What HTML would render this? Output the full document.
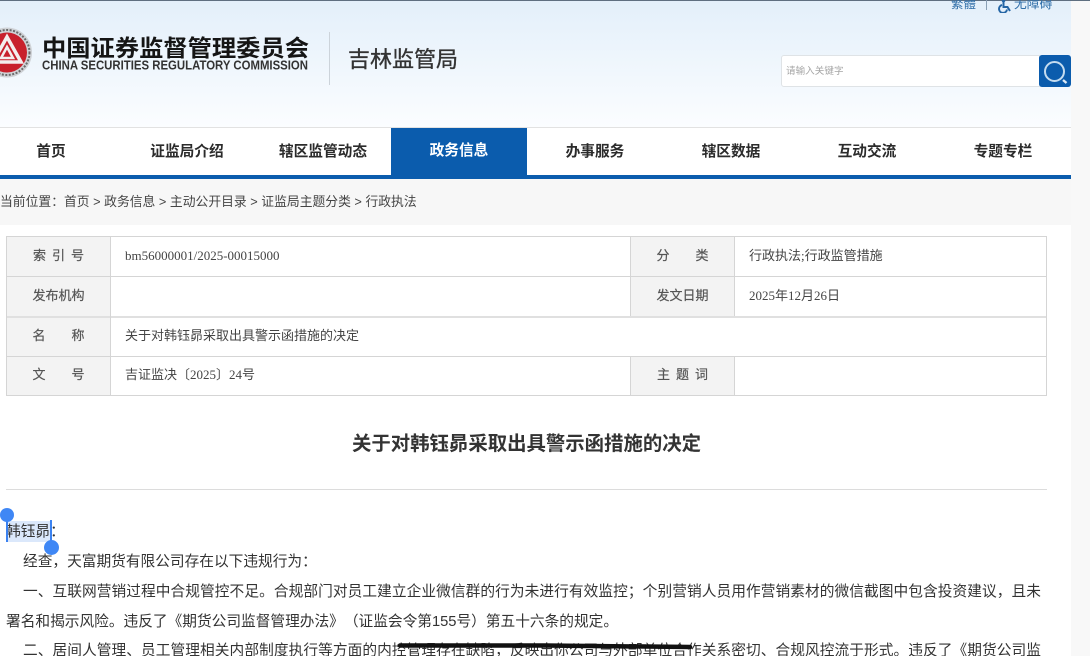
<!DOCTYPE html>
<html lang="zh-CN">
<head>
<meta charset="utf-8">
<title>关于对韩钰昴采取出具警示函措施的决定</title>
<style>
*{box-sizing:border-box;margin:0;padding:0}
html,body{width:1090px;height:656px;overflow:hidden;background:#f8f8f8}
body{position:relative;font-family:"Liberation Sans","Noto Sans CJK SC",sans-serif;color:#333;text-spacing-trim:space-all;font-feature-settings:"chws" 0,"halt" 0}
.a{position:absolute;white-space:nowrap}
#hd{left:0;top:0;width:1071px;height:127px;background:linear-gradient(#e3effa,#fbfdff)}
#topline{left:0;top:0;width:1090px;height:1px;background:#5f6f80}
#nav{left:0;top:127px;width:1071px;height:52px;background:#fff;border-top:1px solid #e2e2e2;border-bottom:4px solid #0b5cad}
.n{position:absolute;top:130px;height:44px;width:136px;text-align:center;font-size:14.7px;font-weight:700;line-height:44px;color:#2b2b2b}
.n.on{background:#0b5cad;color:#fff;height:49px;top:128px;line-height:46px}
#crumb{left:0;top:179px;width:1071px;height:46px;background:#f7f7f7}
#crumbt{left:0;top:192px;font-size:12.8px;line-height:20px;color:#444}
#main{left:0;top:225px;width:1071px;height:431px;background:#fff}
.hl{background:#d5d5d5;height:1px}
.vl{background:#d5d5d5;width:1px}
.lab{background:#f3f3f3}
.lt{font-size:13px;line-height:20px;color:#555;text-align:center;width:104px;-webkit-text-stroke:.2px #555}
.vt{font-size:13px;line-height:20px;color:#444}
.serif{font-family:"Liberation Serif","Noto Sans CJK SC",serif}
.p{font-size:14.7px;line-height:30px;color:#333;overflow:hidden}
.j{white-space:normal;text-align:justify;text-align-last:justify}
</style>
</head>
<body>
<div class="a" id="hd"></div>
<div class="a" id="topline"></div>

<svg class="a" style="left:0;top:20px" width="40" height="65" viewBox="0 20 40 65">
  <circle cx="7" cy="52.500" r="25" fill="#cfd2d6"/>
  <circle cx="7" cy="52.500" r="22.500" fill="none" stroke="#6a6a6a" stroke-width="2" stroke-dasharray="2 1.500"/>
  <circle cx="7" cy="52.500" r="20" fill="#c8202c"/>
  <path d="M7 37 L21 62 L-7 62 Z" fill="none" stroke="#f3eeee" stroke-width="3.500"/>
  <path d="M7 47 L13 58 L1 58 Z" fill="none" stroke="#f3eeee" stroke-width="2.500"/>
</svg>

<svg class="a" style="left:40px;top:30px" width="275" height="46">
  <text x="2" y="26" font-size="23" font-weight="700" fill="#151515" textLength="267" lengthAdjust="spacingAndGlyphs" font-family="'Liberation Sans','Noto Sans CJK SC',sans-serif">中国证券监督管理委员会</text>
  <text x="2" y="39.500" font-size="12.500" font-weight="700" fill="#333" textLength="266" lengthAdjust="spacingAndGlyphs" font-family="'Liberation Sans',sans-serif">CHINA SECURITIES REGULATORY COMMISSION</text>
</svg>
<div class="a" style="left:329px;top:32px;width:1px;height:53px;background:#ccd3da"></div>
<div class="a" style="left:348px;top:44px;font-size:22px;line-height:32px;color:#333;-webkit-text-stroke:.35px #333">吉林监管局</div>

<div class="a" style="left:951px;top:-4px;font-size:12.500px;line-height:16px;color:#2f6ea8">繁體</div>
<div class="a" style="left:986px;top:0;width:1px;height:10px;background:#8aa0b5"></div>
<svg class="a" style="left:997px;top:0" width="16" height="13" viewBox="0 0 16 13">
  <circle cx="6.500" cy="0.500" r="1.800" fill="#2566a5"/>
  <path d="M5 5 A4 4 0 1 0 10 9.500" fill="none" stroke="#2566a5" stroke-width="2"/>
  <path d="M6.500 2 V7 H10.500 L13 11" fill="none" stroke="#2566a5" stroke-width="2"/>
</svg>
<div class="a" style="left:1014px;top:-4px;font-size:12.800px;line-height:16px;color:#2f6ea8">无障碍</div>

<div class="a" style="left:781px;top:55px;width:259px;height:32px;background:#fff;border:1px solid #dfe3e6;border-radius:3px 0 0 3px"></div>
<div class="a" style="left:786px;top:65px;font-size:9.600px;line-height:14px;color:#a5a5a5">请输入关键字</div>
<div class="a" style="left:1039px;top:55px;width:32px;height:32px;background:#0b5cad;border-radius:3px"></div>
<svg class="a" style="left:1039px;top:55px" width="32" height="32">
  <circle cx="15.500" cy="16.500" r="9.500" fill="none" stroke="#c4dcf0" stroke-width="2"/>
  <path d="M24 25 L27.500 28" stroke="#dce9f5" stroke-width="2.400"/>
</svg>

<div class="a" id="nav"></div>
<div class="n" style="left:-17px">首页</div>
<div class="n" style="left:119px">证监局介绍</div>
<div class="n" style="left:255px">辖区监管动态</div>
<div class="n on" style="left:391px">政务信息</div>
<div class="n" style="left:527px">办事服务</div>
<div class="n" style="left:663px">辖区数据</div>
<div class="n" style="left:799px">互动交流</div>
<div class="n" style="left:935px">专题专栏</div>

<div class="a" id="crumb"></div>
<div class="a" id="crumbt">当前位置：首页 &gt; 政务信息 &gt; 主动公开目录 &gt; 证监局主题分类 &gt; 行政执法</div>
<div class="a" id="main"></div>

<div class="a lab" style="left:6px;top:236px;width:105px;height:160px"></div>
<div class="a lab" style="left:630px;top:236px;width:105px;height:80px"></div>
<div class="a" style="left:111px;top:317px;width:935px;height:39px;background:#fff"></div>
<div class="a lab" style="left:630px;top:356px;width:105px;height:40px"></div>

<div class="a hl" style="left:6px;top:236px;width:1041px"></div>
<div class="a hl" style="left:6px;top:276px;width:1041px"></div>
<div class="a hl" style="left:6px;top:316px;width:1041px;height:2px;background:#e0e0e0"></div>
<div class="a hl" style="left:6px;top:356px;width:1041px"></div>
<div class="a hl" style="left:6px;top:395px;width:1041px"></div>
<div class="a vl" style="left:6px;top:236px;height:160px"></div>
<div class="a vl" style="left:110px;top:236px;height:160px"></div>
<div class="a vl" style="left:1046px;top:236px;height:160px"></div>
<div class="a vl" style="left:630px;top:236px;height:80px"></div>
<div class="a vl" style="left:734px;top:236px;height:80px"></div>
<div class="a vl" style="left:630px;top:356px;height:40px"></div>
<div class="a vl" style="left:734px;top:356px;height:40px"></div>

<div class="a lt" style="left:33px;top:246px;letter-spacing:6px;text-align:left">索引号</div>
<div class="a lt" style="left:6.500px;top:286px">发布机构</div>
<div class="a lt" style="left:6.500px;top:326px">名&emsp;&emsp;称</div>
<div class="a lt" style="left:6.500px;top:365px">文&emsp;&emsp;号</div>
<div class="a lt" style="left:630.500px;top:246px">分&emsp;&emsp;类</div>
<div class="a lt" style="left:630.500px;top:286px">发文日期</div>
<div class="a lt" style="left:657px;top:365px;letter-spacing:6px;text-align:left">主题词</div>

<div class="a vt serif" style="left:125px;top:246px">bm56000001/2025-00015000</div>
<div class="a vt serif" style="left:749px;top:246px">行政执法;行政监管措施</div>
<div class="a vt serif" style="left:749px;top:286px">2025年12月26日</div>
<div class="a vt serif" style="left:125px;top:326px">关于对韩钰昴采取出具警示函措施的决定</div>
<div class="a vt serif" style="left:125px;top:365px">吉证监决〔2025〕24号</div>

<div class="a" style="left:0;top:430px;width:1053px;text-align:center;font-size:19.400px;line-height:28px;font-weight:700;color:#333">关于对韩钰昴采取出具警示函措施的决定</div>
<div class="a" style="left:6px;top:489px;width:1041px;height:1px;background:#dcdcdc"></div>

<div class="a" style="left:6px;top:521px;width:45px;height:21px;background:#dbe8fb"></div>
<div class="a p" style="left:6px;top:517px">韩钰昴：</div>
<div class="a" style="left:6px;top:520px;width:1.500px;height:22px;background:#3b82f0"></div>
<div class="a" style="left:50px;top:520px;width:1.500px;height:22px;background:#3b82f0"></div>
<div class="a" style="left:0;top:508px;width:14px;height:14px;border-radius:50%;background:#3f87f5"></div>
<div class="a" style="left:44px;top:540px;width:15px;height:15px;border-radius:50%;background:#3f87f5"></div>

<div class="a p" style="left:23px;top:547px">经查，天富期货有限公司存在以下违规行为：</div>
<div class="a p j" style="left:23px;top:577px;width:1018px;height:30px">一、互联网营销过程中合规管控不足。合规部门对员工建立企业微信群的行为未进行有效监控；个别营销人员用作营销素材的微信截图中包含投资建议，且未</div>
<div class="a p" style="left:6px;top:607px">署名和揭示风险。违反了《期货公司监督管理办法》（证监会令第155号）第五十六条的规定。</div>
<div class="a p j" style="left:23px;top:636px;width:1018px;height:30px">二、居间人管理、员工管理相关内部制度执行等方面的内控管理存在缺陷，反映出你公司与外部单位合作关系密切、合规风控流于形式。违反了《期货公司监</div>
<svg class="a" style="left:395px;top:640px" width="300" height="14">
  <path d="M5 5.500 L150 5.500 L295 7" fill="none" stroke="#111" stroke-width="4.500" stroke-linecap="round"/>
</svg>
</body>
</html>
